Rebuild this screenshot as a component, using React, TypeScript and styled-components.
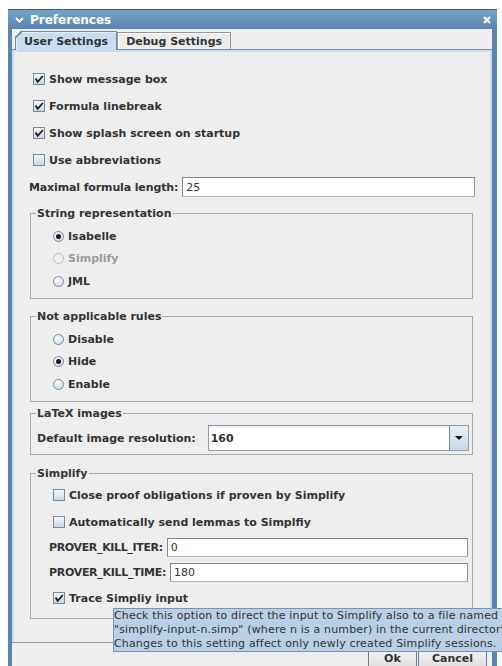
import React from "react";
import styled, { createGlobalStyle } from "styled-components";

const GlobalStyle = createGlobalStyle`
  html, body {
    margin: 0;
    padding: 0;
    overflow: hidden;
    background: #ffffff;
  }
  body {
    font-family: "DejaVu Sans", "Liberation Sans", sans-serif;
    font-size: 11px;
    color: #333333;
  }
  *, *::before, *::after { box-sizing: border-box; }
`;

/* ---------- window chrome ---------- */

const Window = styled.div`
  position: relative;
  margin: 9px 0 0 8px;
  width: 489px;
  display: flex;
  flex-direction: column;
`;

const TitleBar = styled.div`
  height: 20px;
  border-top: 1px solid #3f5f84;
  background: linear-gradient(#76a1c7, #5a85b0);
  display: flex;
  align-items: center;
  padding: 0 6px 0 7px;
  color: #ffffff;
`;

const TitleText = styled.span`
  flex: 1;
  margin-left: 6px;
  font-size: 12px;
  font-weight: bold;
  line-height: 14px;
`;

const Frame = styled.div`
  border-left: 4px solid #5b84ae;
  border-right: 5px solid #5b84ae;
  background: #eeeeee;
  display: flex;
  flex-direction: column;
`;

/* ---------- tabs ---------- */

const TabStrip = styled.div`
  height: 21px;
  border-bottom: 1px solid #7a8a99;
  display: flex;
  align-items: flex-end;
  padding-left: 3px;
`;

const Tab = styled.div<{ $selected?: boolean }>`
  position: relative;
  height: ${(p) => (p.$selected ? 19 : 17)}px;
  margin-bottom: ${(p) => (p.$selected ? -1 : 0)}px;
  z-index: ${(p) => (p.$selected ? 1 : 0)};
  padding: 0 8px;
  display: flex;
  align-items: center;
  font-weight: bold;
  line-height: 13px;
  border: 1px solid ${(p) => (p.$selected ? "#7a8a99" : "#8e98a3")};
  border-bottom: none;
  background: ${(p) => (p.$selected ? "#c8ddf2" : "#ececec")};
  box-shadow: inset 1px 1px 0 ${(p) => (p.$selected ? "#e4eefa" : "#ffffff")};
  ${(p) =>
    p.$selected &&
    `
    clip-path: polygon(6px 0, 100% 0, 100% 100%, 0 100%, 0 6px);
    &::before {
      content: "";
      position: absolute;
      top: -1px;
      left: -1px;
      width: 7px;
      height: 7px;
      background: linear-gradient(to bottom right, transparent calc(50% - 0.8px), #7a8a99 calc(50% - 0.8px), #7a8a99 calc(50% + 0.8px), transparent calc(50% + 0.8px));
    }
  `}
`;

const Panel = styled.div`
  background: #eeeeee;
  box-shadow: inset 2px 2px 0 #c8ddf2, inset -2px 0 0 #c8ddf2;
  border-bottom: 1px solid #8a9cb0;
  padding: 20px 17px 23px 17px;
  display: flex;
  flex-direction: column;
`;

/* ---------- form controls ---------- */

const CheckRow = styled.div<{ $mt?: number; $ml?: number }>`
  height: 18px;
  display: flex;
  align-items: center;
  gap: 4px;
  margin-top: ${(p) => p.$mt ?? 0}px;
  margin-left: ${(p) => p.$ml ?? 0}px;
  font-weight: bold;
  line-height: 13px;
`;

const CheckBox = styled.span`
  flex: none;
  width: 12px;
  height: 12px;
  border: 1px solid #7a8a99;
  background: linear-gradient(#f4f8fc, #dce7f3 55%, #c6d7ea);
  display: inline-flex;
  align-items: center;
  justify-content: center;
`;

const RadioRow = styled.div<{ $mt?: number; $disabled?: boolean }>`
  height: 18px;
  display: flex;
  align-items: center;
  gap: 4px;
  margin-top: ${(p) => p.$mt ?? 0}px;
  margin-left: 15px;
  font-weight: bold;
  line-height: 13px;
  color: ${(p) => (p.$disabled ? "#9a9a9a" : "#333333")};
`;

const RadioDot = styled.span<{ $checked?: boolean; $disabled?: boolean }>`
  flex: none;
  width: 11px;
  height: 11px;
  margin-left: 1px;
  border-radius: 50%;
  border: 1px solid ${(p) => (p.$disabled ? "#b4bcc4" : "#7a8a99")};
  background: ${(p) =>
    p.$disabled
      ? "#eeeeee"
      : "radial-gradient(circle at 40% 30%, #ffffff, #dfe8f3 50%, #bfd2e8)"};
  display: inline-flex;
  align-items: center;
  justify-content: center;
  &::after {
    content: "";
    display: ${(p) => (p.$checked ? "block" : "none")};
    width: 5px;
    height: 5px;
    border-radius: 50%;
    background: #1a1a1a;
  }
`;

const FieldRow = styled.div<{ $mt?: number; $ml?: number; $mr?: number; $h?: number; $gap?: number }>`
  height: ${(p) => p.$h ?? 20}px;
  display: flex;
  align-items: center;
  gap: ${(p) => p.$gap ?? 4}px;
  margin-top: ${(p) => p.$mt ?? 0}px;
  margin-left: ${(p) => p.$ml ?? 0}px;
  margin-right: ${(p) => p.$mr ?? 0}px;
`;

const FieldLabel = styled.span<{ $ls?: number }>`
  flex: none;
  font-weight: bold;
  line-height: 13px;
  letter-spacing: ${(p) => p.$ls ?? 0}px;
`;

const TextField = styled.input`
  flex: 1;
  min-width: 0;
  height: 100%;
  margin: 0;
  padding: 0 3px;
  border: 1px solid #7a8a99;
  border-right-color: #8796a6;
  border-bottom-color: #aab6c2;
  background: #ffffff;
  font-family: inherit;
  font-size: 11px;
  color: #333333;
  outline: none;
`;

const Combo = styled.div`
  flex: 1;
  height: 26px;
  display: flex;
  border: 1px solid #8c9bad;
  background: #ffffff;
`;

const ComboValue = styled.div`
  flex: 1;
  display: flex;
  align-items: center;
  padding-left: 2px;
  font-weight: bold;
  box-shadow: inset 0 1px 0 #e2e8ef;
`;

const ComboButton = styled.div`
  width: 19px;
  border-left: 1px solid #7a8a99;
  background: linear-gradient(#e6eef7, #c9d9eb);
  display: flex;
  align-items: center;
  justify-content: center;
`;

const Group = styled.fieldset<{ $mt: number; $pt: number; $pb: number }>`
  margin: ${(p) => p.$mt}px 2px 0 1px;
  padding: ${(p) => p.$pt}px 3px ${(p) => p.$pb}px 6px;
  min-width: 0;
  border: 1px solid #a9a9a9;
  display: flex;
  flex-direction: column;
`;

const GroupTitle = styled.legend`
  margin-left: -1px;
  padding: 0 1px;
  font-weight: bold;
  line-height: 13px;
  height: 13px;
`;

/* ---------- bottom buttons & tooltip ---------- */

const ButtonBar = styled.div`
  display: flex;
  justify-content: flex-end;
  gap: 1px;
  padding: 4px 5px 6px 0;
`;

const Button = styled.button`
  height: 22px;
  min-width: 49px;
  padding: 0 13px;
  border: 1px solid #6f7f8f;
  background: linear-gradient(#f6f6f6, #dedede);
  font-family: inherit;
  font-size: 11px;
  font-weight: bold;
  color: #333333;
`;

const Tooltip = styled.div`
  position: absolute;
  left: 105px;
  top: 599px;
  z-index: 5;
  background: #b8cfe5;
  border: 1px solid #7394bd;
  color: #333333;
  font-size: 11px;
  line-height: 14px;
  letter-spacing: 0.16px;
  white-space: nowrap;
  padding: 0 3px 0 0;
`;

/* ---------- icons ---------- */

const Check = () => (
  <svg width="10" height="10" viewBox="0 0 10 10">
    <path d="M1.6 4.6 L3.7 7.8 L8.9 2" fill="none" stroke="#1c1c1c" strokeWidth="1.8" />
  </svg>
);

const Chevron = () => (
  <svg width="9" height="6" viewBox="0 0 9 6">
    <path d="M1 1 L4.5 4.6 L8 1" fill="none" stroke="#ffffff" strokeWidth="2" />
  </svg>
);

const CloseCross = () => (
  <svg width="8" height="8" viewBox="0 0 8 8">
    <path d="M1 1 L7 7 M7 1 L1 7" fill="none" stroke="#ffffff" strokeWidth="2.2" />
  </svg>
);

const DownArrow = () => (
  <svg width="8" height="4" viewBox="0 0 8 4">
    <path d="M0 0 H8 L4 4 Z" fill="#111111" />
  </svg>
);

/* ---------- composed parts ---------- */

type CheckProps = { label: string; checked?: boolean; mt?: number; ml?: number };
const CheckOption = ({ label, checked, mt, ml }: CheckProps) => (
  <CheckRow $mt={mt} $ml={ml}>
    <CheckBox>{checked && <Check />}</CheckBox>
    <span>{label}</span>
  </CheckRow>
);

type RadioProps = { label: string; checked?: boolean; disabled?: boolean; mt?: number };
const RadioOption = ({ label, checked, disabled, mt }: RadioProps) => (
  <RadioRow $mt={mt} $disabled={disabled}>
    <RadioDot $checked={checked} $disabled={disabled} />
    <span>{label}</span>
  </RadioRow>
);

export default function App() {
  return (
    <>
      <GlobalStyle />
      <Window>
        <TitleBar>
          <Chevron />
          <TitleText>Preferences</TitleText>
          <CloseCross />
        </TitleBar>
        <Frame>
          <TabStrip>
            <Tab $selected>User Settings</Tab>
            <Tab>Debug Settings</Tab>
          </TabStrip>
          <Panel>
            <CheckOption label="Show message box" checked ml={4} />
            <CheckOption label="Formula linebreak" checked ml={4} mt={9} />
            <CheckOption label="Show splash screen on startup" checked ml={4} mt={9} />
            <CheckOption label="Use abbreviations" ml={4} mt={9} />

            <FieldRow $mt={8}>
              <FieldLabel $ls={-0.13}>Maximal formula length:</FieldLabel>
              <TextField readOnly value="25" />
            </FieldRow>

            <Group $mt={10} $pt={7} $pb={8}>
              <GroupTitle>String representation</GroupTitle>
              <RadioOption label="Isabelle" checked />
              <RadioOption label="Simplify" disabled mt={4.5} />
              <RadioOption label="JML" mt={4.5} />
            </Group>

            <Group $mt={11} $pt={7} $pb={8}>
              <GroupTitle>Not applicable rules</GroupTitle>
              <RadioOption label="Disable" />
              <RadioOption label="Hide" checked mt={4.5} />
              <RadioOption label="Enable" mt={4.5} />
            </Group>

            <Group $mt={5} $pt={5} $pb={3}>
              <GroupTitle>LaTeX images</GroupTitle>
              <FieldRow $h={26} $gap={12}>
                <FieldLabel>Default image resolution:</FieldLabel>
                <Combo>
                  <ComboValue>160</ComboValue>
                  <ComboButton>
                    <DownArrow />
                  </ComboButton>
                </Combo>
              </FieldRow>
            </Group>

            <Group $mt={12} $pt={6} $pb={11}>
              <GroupTitle>Simplify</GroupTitle>
              <CheckOption label="Close proof obligations if proven by Simplify" ml={16} />
              <CheckOption label="Automatically send lemmas to Simplfiy" ml={16} mt={9} />
              <FieldRow $mt={7} $ml={12} $mr={1} $h={19}>
                <FieldLabel $ls={-0.35}>PROVER_KILL_ITER:</FieldLabel>
                <TextField readOnly value="0" />
              </FieldRow>
              <FieldRow $mt={6} $ml={12} $mr={1} $h={19}>
                <FieldLabel $ls={-0.3}>PROVER_KILL_TIME:</FieldLabel>
                <TextField readOnly value="180" />
              </FieldRow>
              <CheckOption label="Trace Simpliy input" checked ml={16} mt={7} />
            </Group>
          </Panel>
          <ButtonBar>
            <Button>Ok</Button>
            <Button>Cancel</Button>
          </ButtonBar>
        </Frame>
        <Tooltip>
          Check this option to direct the input to Simplify also to a file named
          <br />
          "simplify-input-n.simp" (where n is a number) in the current directory.
          <br />
          Changes to this setting affect only newly created Simplify sessions.
        </Tooltip>
      </Window>
    </>
  );
}
